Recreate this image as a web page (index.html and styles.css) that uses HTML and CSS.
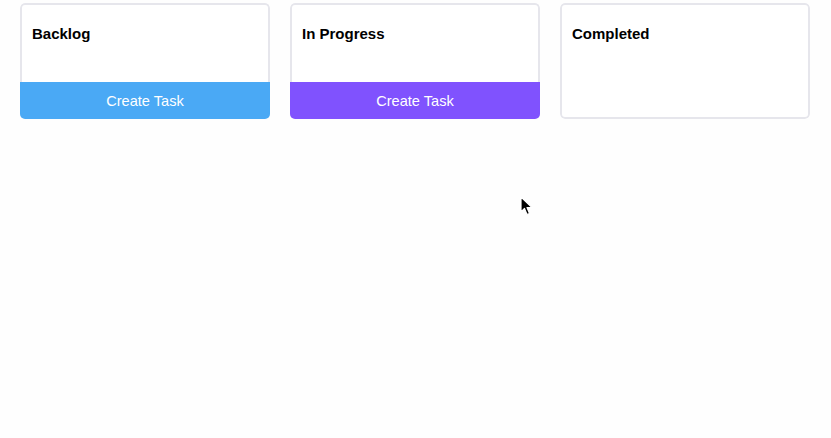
FILE: index.html
```html
<!DOCTYPE html>
<html>
<head>
<meta charset="utf-8">
<link rel="stylesheet" href="styles.css">
</head>
<body>
<div class="board">
  <div class="column">
    <div class="col-body"><h3 class="col-title">Backlog</h3></div>
    <button class="create blue">Create Task</button>
  </div>
  <div class="column">
    <div class="col-body"><h3 class="col-title">In Progress</h3></div>
    <button class="create purple">Create Task</button>
  </div>
  <div class="column">
    <div class="col-body full"><h3 class="col-title">Completed</h3></div>
  </div>
</div>
<svg class="cursor" width="14" height="20" viewBox="0 0 14 20">
  <path d="M1 1 L1 16 L4.5 12.5 L7 18.5 L9.5 17.5 L7 11.5 L12 11.5 Z" fill="#000" stroke="#fff" stroke-width="1.2" stroke-linejoin="round"/>
</svg>
</body>
</html>
```
FILE: styles.css
```css
html, body {
  margin: 0;
  padding: 0;
  background: #fefefe;
  font-family: "Liberation Sans", Arial, Helvetica, sans-serif;
}
.board {
  display: flex;
  gap: 20px;
  padding: 3px 20px;
}
.column {
  width: 250px;
  height: 116px;
  display: flex;
  flex-direction: column;
  border-radius: 5px;
  overflow: hidden;
}
.col-body {
  flex: 1;
  border: 2px solid #e6e6ec;
  border-bottom: none;
  border-radius: 5px 5px 0 0;
  padding: 0 10px;
  background: #fff;
}
.col-body.full {
  border-bottom: 2px solid #e6e6ec;
  border-radius: 5px;
}
.col-title {
  margin: 20px 0 0;
  font-size: 15px;
  line-height: 18px;
  font-weight: bold;
  color: #000;
}
.create {
  height: 37px;
  border: none;
  margin: 0;
  padding: 0;
  width: 100%;
  color: #fff;
  font-family: "Liberation Sans", Arial, Helvetica, sans-serif;
  font-size: 14.6px;
  padding-top: 1px;
}
.blue { background: #4aa9f5; }
.purple { background: #8052fe; }
.cursor {
  position: absolute;
  left: 520px;
  top: 196px;
}
```
